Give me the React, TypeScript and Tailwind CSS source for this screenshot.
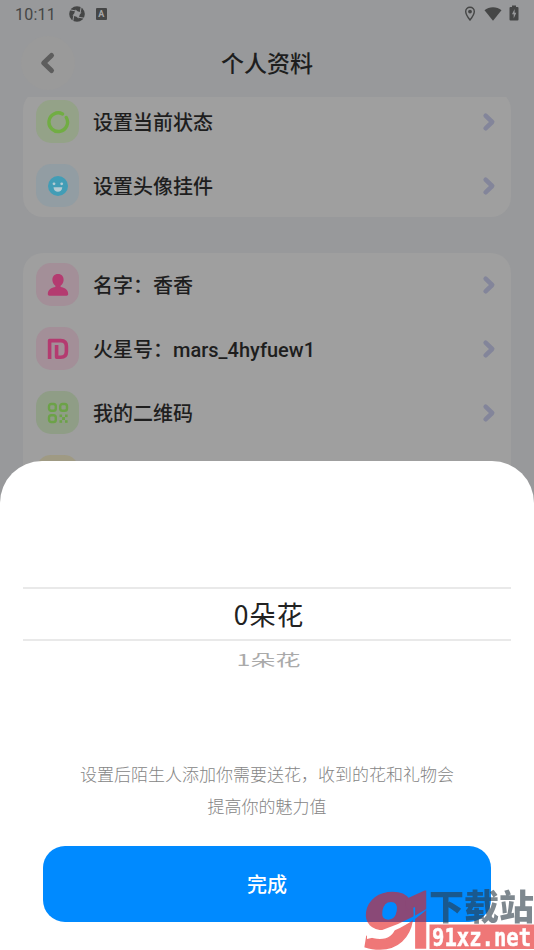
import type { ReactNode } from "react";

function Chevron() {
  return (
    <svg width="16" height="20" viewBox="0 0 16 20" className="shrink-0">
      <path d="M3.600 3.700 10.200 10l-6.600 6.300" fill="none" stroke="#83859a" strokeWidth="4.500" strokeLinecap="round" strokeLinejoin="round" />
    </svg>
  );
}

function Row({ tile, icon, label }: { tile: string; icon?: ReactNode; label: ReactNode }) {
  return (
    <div className="flex h-16 items-start">
      <div className="flex h-[43px] w-full items-center">
        <div className={"flex size-[43px] shrink-0 items-center justify-center rounded-[15px] " + tile}>{icon}</div>
        <span className="ml-[14px] flex-1 pt-[3px] text-[20px] leading-[30px] font-medium text-[#1e1e1e]">{label}</span>
        <Chevron />
      </div>
    </div>
  );
}

const ring = (
  <svg width="24" height="24" viewBox="0 0 24 24" fill="none" stroke="#71ad43" strokeWidth="3.400" strokeLinecap="round">
    <path d="M20.300 7.500A9.300 9.300 0 1 1 16.500 3.900" />
  </svg>
);
const smile = (
  <svg width="20" height="20" viewBox="0 0 20 20">
    <circle cx="10" cy="10" r="10" fill="#429db6" />
    <circle cx="6" cy="7.800" r="1.400" fill="#b4cbd3" />
    <circle cx="13.700" cy="7.800" r="1.400" fill="#b4cbd3" />
    <path d="M5.500 11.300h8.800c-.3 6-8.500 6-8.800 0z" fill="#b4cbd3" />
  </svg>
);
const person = (
  <svg width="22" height="22" viewBox="0 0 22 22" fill="#b43b70">
    <path d="M11 0C7.300 0 5.100 2.700 5.400 6.200c.2 2.600 1.400 4.300 3 5.500v1.400C4.600 13.500.8 15.700.8 20c0 1 .6 1.700 1.700 1.700h17c1.100 0 1.700-.7 1.700-1.700 0-4.300-3.800-6.500-7.600-6.900v-1.400c1.600-1.200 2.800-2.900 3-5.500C16.900 2.700 14.700 0 11 0z" />
  </svg>
);
const idBadge = (
  <svg width="22" height="22" viewBox="0 0 22 22" fill="none" stroke="#b43b70" strokeWidth="3.600">
    <path d="M2.600 21V2.600h11.200q5.600 0 5.600 5.700v5.500q0 5.500-5.600 5.500H9.600V7" strokeLinejoin="round" />
  </svg>
);
const qr = (
  <svg width="22" height="22" viewBox="0 0 22 22" fill="none" stroke="#6ca248" strokeWidth="2.400">
    <rect x="2" y="2" width="6.800" height="6.800" rx="2.300" />
    <rect x="13.200" y="2" width="6.800" height="6.800" rx="2.300" />
    <rect x="2" y="13.200" width="6.800" height="6.800" rx="2.300" />
    <g fill="#6ca248" stroke="none">
      <rect x="12.500" y="12.500" width="2.600" height="2.600" />
      <rect x="18" y="12.500" width="2.600" height="2.600" />
      <rect x="15.100" y="15.100" width="2.900" height="2.900" />
      <rect x="12.500" y="18.200" width="2.600" height="2.600" />
      <rect x="18" y="18.200" width="2.600" height="2.600" />
    </g>
  </svg>
);

function StatusBar() {
  return (
    <div className="flex h-7 items-center pr-[15px] pl-[15px] text-[#454646]">
      <span className="pt-px font-[Roboto] text-[16px] leading-7 tracking-[0.2px]">10:11</span>
      <svg className="ml-[13px]" width="16" height="16" viewBox="0 0 16 16">
        <circle cx="8" cy="8" r="7.800" fill="currentColor" />
        <path d="M6.500 3.500 8.500 5.200 12.500 6.500 10.800 8.500 9.500 12.500 7.500 10.800 3.500 9.500 5.200 7.500z" fill="#98999b" />
        <path d="M1 3.800 6 4.800M12.200 1 11.300 6M15 12.200 10 11.300M3.800 15 4.700 10" fill="none" stroke="#98999b" strokeWidth="1" />
      </svg>
      <span className="ml-[11px] flex h-3 w-[11px] items-center justify-center rounded-[1px] bg-[#454646] font-[Roboto] text-[9px] leading-3 font-bold text-[#a5a6a7]">A</span>
      <div className="ml-auto flex items-center">
        <svg width="12" height="16" viewBox="0 0 12 16">
          <path d="M6 1.200c-2.500 0-4.300 1.900-4.300 4.300C1.700 8.700 6 14 6 14s4.300-5.300 4.300-8.500C10.300 3.100 8.500 1.200 6 1.200z" fill="none" stroke="currentColor" strokeWidth="1.400" />
          <circle cx="6" cy="5.600" r="1.900" fill="currentColor" />
        </svg>
        <svg className="ml-2" width="18" height="14" viewBox="0 0 18 14">
          <path d="M9 13.800.5 3.300C5-.9 13-.9 17.500 3.300z" fill="currentColor" />
        </svg>
        <svg className="-mt-[2px] ml-[7px]" width="10" height="16" viewBox="0 0 10 16">
          <path d="M3 .5h4V2h1.500q1 0 1 1v11.500q0 1-1 1h-7q-1 0-1-1V3q0-1 1-1H3z" fill="currentColor" />
          <path d="M5.600 4 3 9.200h1.700V13.500l2.600-5.700H5.600z" fill="#98999b" />
        </svg>
      </div>
    </div>
  );
}

function Watermark() {
  return (
    <div className="absolute right-0 bottom-0 h-[62px] w-[171px] opacity-60">
      <svg className="overflow-visible" width="171" height="62" viewBox="0 -2 171 62">
        <defs>
          <mask id="slash" maskUnits="userSpaceOnUse" x="-10" y="-10" width="100" height="80">
            <rect x="-10" y="-10" width="100" height="80" fill="#fff" />
            <path d="M4 44.500Q37 36 66 17.500Q40 42 4 49z" fill="#000" />
          </mask>
        </defs>
        <g mask="url(#slash)" fill="#e61e1e" stroke="#e61e1e" strokeWidth="1.500">
          <text transform="translate(0 57.500) skewX(-9)" fontFamily="DejaVu Sans, sans-serif" fontWeight="700" fontSize="75" textLength="56" lengthAdjust="spacingAndGlyphs" x="-6">9</text>
          <text x="38" y="58" fontFamily="Roboto, sans-serif" fontWeight="900" fontSize="79" textLength="35" lengthAdjust="spacingAndGlyphs">1</text>
        </g>
        <text x="66" y="30" fontFamily="Noto Sans CJK SC, sans-serif" fontWeight="900" fontSize="35" fill="#2a3a46" textLength="105" lengthAdjust="spacingAndGlyphs">下载站</text>
        <rect x="66.500" y="34.500" width="105" height="24.500" fill="#e61e1e" />
        <text x="69" y="55.500" fontFamily="DejaVu Sans Mono, monospace" fontWeight="700" fontSize="24" fill="#fff" stroke="#fff" strokeWidth=".5" textLength="99" lengthAdjust="spacingAndGlyphs">91xz.net</text>
      </svg>
    </div>
  );
}

export default function App() {
  return (
    <div className="relative h-[950px] w-[534px] overflow-hidden bg-[#98999b] font-[Roboto,'Noto_Sans_CJK_SC',sans-serif]">
      <StatusBar />
      <header className="grid h-[69px] grid-cols-[80px_1fr_80px] items-center">
        <button className="ml-[21px] flex size-[54px] items-center justify-center rounded-full bg-[#9a9a9a]">
          <svg width="16" height="24" viewBox="0 0 16 24">
            <path d="M11.500 4.500 3.700 12l7.800 7.500" fill="none" stroke="#5d5d5d" strokeWidth="5" strokeLinecap="round" strokeLinejoin="round" />
          </svg>
        </button>
        <h1 className="pt-[4px] text-center text-[23px] leading-[34px] font-medium text-[#1e1e1e]">个人资料</h1>
      </header>
      <main className="h-[400px] overflow-hidden px-[23px]">
        <section className="-mt-[7px] h-[127px] rounded-[20px] bg-[#9f9f9f] px-[13px] pt-[10px]">
          <Row tile="bg-[#94a288]" icon={ring} label="设置当前状态" />
          <Row tile="bg-[#929da3]" icon={smile} label="设置头像挂件" />
        </section>
        <section className="mt-9 h-[300px] rounded-[20px] bg-[#9f9f9f] px-[13px] pt-[10px]">
          <Row tile="bg-[#a38f98]" icon={person} label="名字：香香" />
          <Row tile="bg-[#a38f98]" icon={idBadge} label={<>火星号：mars_4hyfuew1</>} />
          <Row tile="bg-[#8f9d86]" icon={qr} label="我的二维码" />
          <Row tile="bg-[#9f9a83]" label="" />
        </section>
      </main>
      <div className="absolute inset-x-0 bottom-0 flex h-[489px] flex-col rounded-t-[42px] bg-white">
        <div className="mx-[23px] mt-[126px] flex h-[54px] items-center justify-center border-y-2 border-[#e9e9e9] pl-[4px] font-['Noto_Sans_CJK_SC',sans-serif] text-[26.500px] tracking-[1px] text-[#222]">
          0朵花
        </div>
        <div className="mt-3 h-[15px] text-center font-['Noto_Sans_CJK_SC',sans-serif] text-[#aaa]">
          <span className="inline-block origin-top -translate-y-[3px] scale-y-[0.620] pl-[3px] text-[25px] leading-[30px]">1朵花</span>
        </div>
        <p className="mt-[90px] text-center font-['Noto_Sans_CJK_SC',sans-serif] text-[17px] leading-8 font-light text-[#858585]">
          设置后陌生人添加你需要送花，收到的花和礼物会<br />提高你的魅力值
        </p>
        <button className="mx-[43px] mt-6 h-[76px] rounded-[22px] bg-[#008aff] pt-px text-[20px] font-medium text-white">完成</button>
      </div>
      <Watermark />
    </div>
  );
}
